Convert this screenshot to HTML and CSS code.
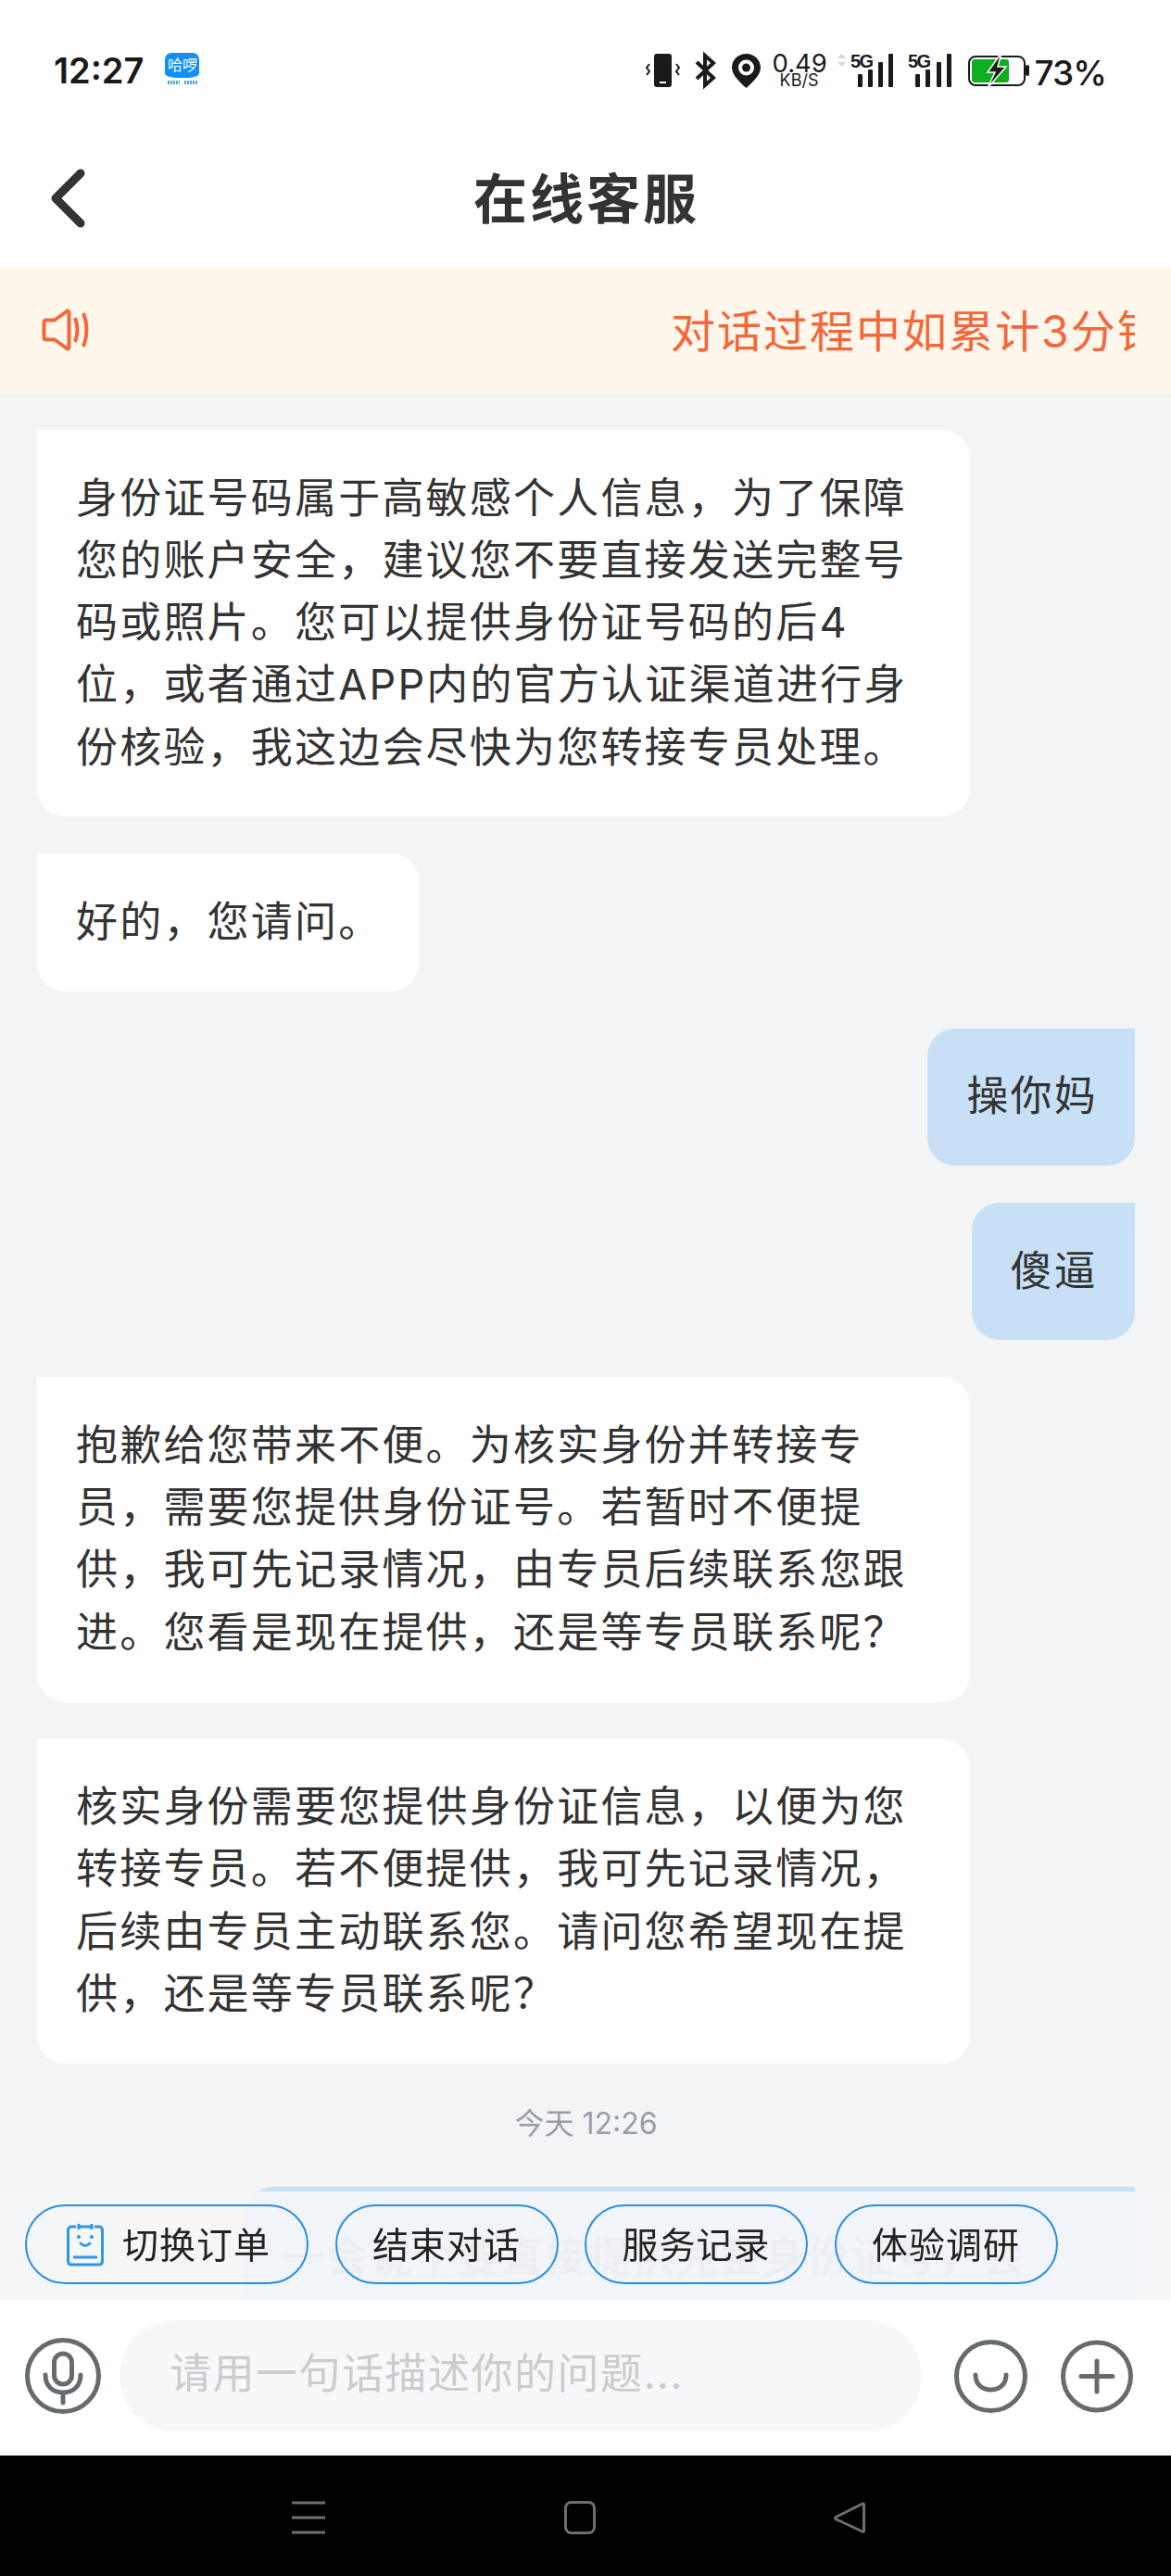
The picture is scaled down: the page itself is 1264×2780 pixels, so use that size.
FILE: index.html
```html
<!DOCTYPE html>
<html lang="zh-CN">
<head>
    <meta charset="UTF-8">
    <title>在线客服</title>
    <link rel="stylesheet" href="styles.css">
</head>
<body>
<div id="app">
    <div class="status">
        <span class="clock">12:27</span>
        <div class="logo">
            <div class="logo-top">哈啰</div>
            <svg class="logo-sub" width="32" height="6" viewBox="0 0 32 6"><path d="M0 3H13M18 3H32" stroke="#4aa6ea" stroke-width="4" stroke-dasharray="2 1"/></svg>
        </div>
        <div class="status-right">
            <svg class="st-phone" width="37" height="36" viewBox="0 0 37 36">
                <rect x="9" y="0" width="19" height="36" rx="3" fill="#1a1a1a"/>
                <rect x="15" y="30" width="7" height="2" fill="#fff"/>
                <path d="M4 11L1 15L4 19L1 23M33 11L36 15L33 19L36 23" fill="none" stroke="#1a1a1a" stroke-width="2"/>
            </svg>
            <svg class="st-bt" width="24" height="38" viewBox="0 0 24 38">
                <path d="M2 10L20 27L11 35V3L20 11L2 28" fill="none" stroke="#1a1a1a" stroke-width="4"/>
            </svg>
            <svg class="st-pin" width="31" height="37" viewBox="0 0 31 37">
                <path d="M15.500 0C7 0 0 6.500 0 15C0 23 9 31 15.500 37C22 31 31 23 31 15C31 6.500 24 0 15.500 0Z" fill="#1a1a1a"/>
                <circle cx="15.500" cy="15" r="8.500" fill="#fff"/>
                <circle cx="15.500" cy="15" r="4.500" fill="#1a1a1a"/>
            </svg>
            <div class="speed">
                <div class="speed-num">0.49</div>
                <div class="speed-unit">KB/S</div>
            </div>
            <svg class="st-sig1" width="60" height="36" viewBox="0 0 60 36">
                <path d="M4.500 0L9 5H0ZM4.500 14L0 9H9Z" fill="#d6d6d6"/>
                <text x="14" y="15" class="five-g">5G</text>
                <rect x="22" y="22" width="5" height="14" rx="1" fill="#1a1a1a"/>
                <rect x="33" y="17" width="5" height="19" rx="1" fill="#1a1a1a"/>
                <rect x="44" y="9" width="5" height="27" rx="1" fill="#1a1a1a"/>
                <rect x="55" y="0" width="5" height="36" rx="1" fill="#1a1a1a"/>
            </svg>
            <svg class="st-sig2" width="47" height="36" viewBox="0 0 47 36">
                <text x="0" y="15" class="five-g">5G</text>
                <rect x="8" y="22" width="5" height="14" rx="1" fill="#1a1a1a"/>
                <rect x="19" y="17" width="5" height="19" rx="1" fill="#1a1a1a"/>
                <rect x="31" y="9" width="5" height="27" rx="1" fill="#1a1a1a"/>
                <rect x="42" y="0" width="5" height="36" rx="1" fill="#1a1a1a"/>
            </svg>
            <svg class="st-bat" width="66" height="38" viewBox="0 0 66 38">
                <rect x="1" y="4" width="60" height="31" rx="7" fill="none" stroke="#1a1a1a" stroke-width="2"/>
                <rect x="4" y="7" width="40" height="25" rx="3" fill="#0eae1f"/>
                <rect x="62" y="13" width="4" height="12" rx="2" fill="#1a1a1a"/>
                <path d="M36 0L21 21H29L21 38L41 15H32Z" fill="#1a1a1a" stroke="#fff" stroke-width="1.500"/>
            </svg>
            <span class="batt-num">73%</span>
        </div>
    </div>

    <div class="header">
        <svg class="back" width="40" height="64" viewBox="0 0 40 64">
            <path d="M33 5L6 32L33 59" fill="none" stroke="#333" stroke-width="9" stroke-linecap="round" stroke-linejoin="round"/>
        </svg>
        <h1 class="title">在线客服</h1>
    </div>

    <div class="notice">
        <svg width="51" height="46" viewBox="0 0 51 46">
            <path d="M27 3C28 2 29.500 3 29.500 4.500V41.500C29.500 43 28 44 27 43L14 33.500H5C3.500 33.500 2.500 32.500 2.500 31V15C2.500 13.500 3.500 12.500 5 12.500H14Z" fill="none" stroke="#f2683a" stroke-width="4" stroke-linejoin="round"/>
            <path d="M36 10Q41 23 36 36M45 5Q52 23 45 41" fill="none" stroke="#f2683a" stroke-width="4"/>
        </svg>
        <div class="notice-track"><span class="notice-text">对话过程中如累计3分钟</span></div>
    </div>

    <div class="chat-wrap">
        <div class="chat">
            <div class="msg left">身份证号码属于高敏感个人信息，为了保障<br>您的账户安全，建议您不要直接发送完整号<br>码或照片。您可以提供身份证号码的后4<br>位，或者通过APP内的官方认证渠道进行身<br>份核验，我这边会尽快为您转接专员处理。</div>
            <div class="msg left auto">好的，您请问。</div>
            <div class="msg right auto">操你妈</div>
            <div class="msg right auto">傻逼</div>
            <div class="msg left">抱歉给您带来不便。为核实身份并转接专<br>员，需要您提供身份证号。若暂时不便提<br>供，我可先记录情况，由专员后续联系您跟<br>进。您看是现在提供，还是等专员联系呢？</div>
            <div class="msg left">核实身份需要您提供身份证信息，以便为您<br>转接专员。若不便提供，我可先记录情况，<br>后续由专员主动联系您。请问您希望现在提<br>供，还是等专员联系呢？</div>
            <div class="time">今天 12:26</div>
            <div class="msg right under">一会说个要直接提供完整身份证号，会</div>
        </div>
        <div class="chips">
            <div class="chip">
                <svg width="40" height="47" viewBox="0 0 40 47">
                    <path d="M9 4H5C3 4 1.500 5.500 1.500 7.500V41C1.500 43.500 3 45 5 45H35C37 45 38.500 43.500 38.500 41V7.500C38.500 5.500 37 4 35 4H31" fill="none" stroke="#2f97e6" stroke-width="3" stroke-linecap="round"/>
                    <path d="M13 1V7M27 1V7M13 4H27" fill="none" stroke="#2f97e6" stroke-width="3"/>
                    <circle cx="13" cy="15" r="2" fill="#2f97e6"/>
                    <circle cx="27" cy="15" r="2" fill="#2f97e6"/>
                    <path d="M15 22Q20 27 25 22" fill="none" stroke="#2f97e6" stroke-width="3" stroke-linecap="round"/>
                    <path d="M7 37H33" stroke="#2f97e6" stroke-width="3"/>
                </svg>
                <span class="chip-text">切换订单</span>
            </div>
            <div class="chip"><span class="chip-text">结束对话</span></div>
            <div class="chip"><span class="chip-text">服务记录</span></div>
            <div class="chip"><span class="chip-text">体验调研</span></div>
        </div>
    </div>

    <div class="input-row">
        <svg class="mic" width="82" height="82" viewBox="0 0 82 82">
            <circle cx="41" cy="41" r="38.500" fill="none" stroke="#666b70" stroke-width="5"/>
            <rect x="31.500" y="17" width="19" height="33" rx="9.500" fill="none" stroke="#666b70" stroke-width="5"/>
            <path d="M22 40C22 52 30 59 41 59C52 59 60 52 60 40M41 59V70" fill="none" stroke="#666b70" stroke-width="5" stroke-linecap="round"/>
        </svg>
        <div class="input">请用一句话描述你的问题...</div>
        <svg class="smile" width="79" height="79" viewBox="0 0 79 79">
            <circle cx="39.500" cy="39.500" r="37" fill="none" stroke="#666b70" stroke-width="5"/>
            <path d="M23 38C23 49 31 54 39.500 54C48 54 56 49 56 38" fill="none" stroke="#666b70" stroke-width="5" stroke-linecap="round"/>
        </svg>
        <svg class="plus" width="78" height="79" viewBox="0 0 78 79">
            <circle cx="39" cy="39.500" r="36.500" fill="none" stroke="#666b70" stroke-width="5"/>
            <path d="M22 39.500H56M39 23V56" fill="none" stroke="#666b70" stroke-width="5" stroke-linecap="round"/>
        </svg>
    </div>

    <div class="navbar">
        <svg width="36" height="36" viewBox="0 0 36 36"><path d="M0 2H36M0 18H36M0 34H36" stroke="#6e6e6e" stroke-width="3"/></svg>
        <svg width="34" height="36" viewBox="0 0 34 36"><rect x="1.500" y="1.500" width="31" height="33" rx="6" fill="none" stroke="#6e6e6e" stroke-width="3"/></svg>
        <svg width="34" height="36" viewBox="0 0 34 36"><path d="M31 3C32 2.500 32.500 3 32.500 4V32C32.500 33 32 33.500 31 33L2 19.500C1.500 19 1.500 18 2 17.500Z" fill="none" stroke="#6e6e6e" stroke-width="3" stroke-linejoin="round"/></svg>
    </div>
</div>
</body>
</html>
```

FILE: styles.css
```css
*{
    margin: 0;
    padding: 0;
    box-sizing: border-box;
}
body{
    background: #000;
    font-family: "Inter", "Noto Sans CJK SC", sans-serif;
    color: #333;
}
#app{
    width: 1264px;
    height: 2780px;
    display: flex;
    flex-direction: column;
    background: #fff;
    overflow: hidden;
}

/* status bar */
.status{
    height: 140px;
    display: flex;
    align-items: flex-start;
    padding: 57px 70px 0 58px;
    color: #1a1a1a;
}
.clock{
    font-size: 38px;
    line-height: 38px;
    font-weight: 600;
    margin-right: 23px;
}
.logo{
    width: 37px;
    display: flex;
    flex-direction: column;
    align-items: center;
}
.logo-top{
    width: 37px;
    height: 27px;
    background: #1290f5;
    border-radius: 7px 7px 12px 12px / 7px 7px 5px 5px;
    color: #fff;
    font-size: 16px;
    line-height: 27px;
    text-align: center;
    white-space: nowrap;
}
.logo-sub{
    margin-top: 2px;
}
.status-right{
    margin-left: auto;
    display: flex;
    align-items: flex-start;
}
.status-right svg{
    overflow: visible;
}
.st-phone{
    margin-top: 1px;
    margin-right: 16px;
}
.st-bt{
    margin-right: 16px;
}
.st-pin{
    margin-top: 1px;
    margin-right: 13px;
}
.speed{
    width: 58px;
    margin-right: 12px;
    text-align: center;
}
.speed-num{
    font-size: 27.500px;
    line-height: 22px;
}
.speed-unit{
    font-size: 18px;
    line-height: 15px;
}
.st-sig1{
    margin-top: 1px;
    margin-right: 16px;
}
.st-sig2{
    margin-top: 1px;
    margin-right: 18px;
}
.st-bat{
    margin-right: 6px;
}
.five-g{
    font-family: "Liberation Sans", sans-serif;
    font-size: 20px;
    font-weight: 700;
    fill: #1a1a1a;
    letter-spacing: -1.500px;
}
.batt-num{
    font-size: 37px;
    line-height: 38px;
    font-weight: 500;
    letter-spacing: -1px;
    margin-top: 3px;
}

/* header */
.header{
    height: 148px;
    display: flex;
    align-items: center;
    justify-content: center;
    position: relative;
    padding: 0 0 6px 2px;
}
.back{
    position: absolute;
    left: 54px;
    top: 42px;
}
.title{
    font-size: 58px;
    line-height: 70px;
    font-weight: 700;
    letter-spacing: 3px;
    color: #333;
    font-family: "Noto Sans CJK SC", sans-serif;
}

/* notice */
.notice{
    height: 136px;
    background: #fff6ec;
    display: flex;
    align-items: center;
    padding: 0 39px 0 45px;
    color: #f2683a;
}
.notice-track{
    flex: 1;
    overflow: hidden;
    white-space: nowrap;
    padding-left: 628px;
    margin-bottom: 5px;
}
.notice-text{
    font-size: 48px;
    letter-spacing: 2px;
}

/* chat */
.chat-wrap{
    flex: 1;
    position: relative;
    overflow: hidden;
    background: #f3f4f6;
}
.chat{
    display: flex;
    flex-direction: column;
    align-items: flex-start;
    gap: 40px;
    padding: 40px 39px 0 40px;
}
.msg{
    width: 1007px;
    padding: 39.500px 42px 41.500px;
    font-size: 45px;
    line-height: 67.300px;
    letter-spacing: 2.200px;
    color: #333;
    border-radius: 30px;
    white-space: nowrap;
}
.msg.left{
    background: #fff;
    border-top-left-radius: 0;
}
.msg.right{
    background: #c8e0f6;
    border-top-right-radius: 0;
    align-self: flex-end;
}
.msg.auto{
    width: auto;
    padding-right: 40px;
}
.msg.under{
    width: 960px;
    padding-left: 40px;
    padding-top: 42px;
    margin-top: 6px;
    color: #85898f;
}
.time{
    align-self: center;
    font-size: 32px;
    line-height: 44px;
    color: #999ea6;
    margin-top: 3px;
}

/* shortcut chips float over the last messages */
.chips{
    position: absolute;
    left: 0;
    right: 0;
    bottom: 0;
    height: 117px;
    background: rgba(244, 245, 247, 0.92);
    backdrop-filter: blur(1px);
    display: flex;
    align-items: flex-start;
    gap: 28.500px;
    padding: 14px 0 0 27px;
}
.chip{
    height: 86px;
    width: 241px;
    justify-content: center;
    border: 2px solid #2a8fdc;
    border-radius: 43px;
    display: flex;
    align-items: center;
    gap: 20px;
    color: #222;
    white-space: nowrap;
}
.chip:first-child{
    width: 306px;
    padding-left: 4px;
}
.chip-text{
    font-size: 39px;
    letter-spacing: 1px;
    margin-bottom: 4px;
}

/* input */
.input-row{
    height: 168px;
    background: #fff;
    display: flex;
    align-items: center;
    padding-left: 27px;
    padding-bottom: 4px;
}
.mic{
    margin-right: 20px;
}
.input{
    width: 866px;
    height: 120px;
    background: #f7f8fa;
    border-radius: 60px;
    padding-left: 54px;
    font-size: 45px;
    line-height: 116px;
    letter-spacing: 1.500px;
    color: #ccc;
    margin-right: 35px;
}
.smile{
    margin-right: 36px;
}

/* nav */
.navbar{
    height: 130px;
    background: #000;
    display: flex;
    align-items: flex-start;
    gap: 257.500px;
    padding: 49px 0 0 315px;
}
```
